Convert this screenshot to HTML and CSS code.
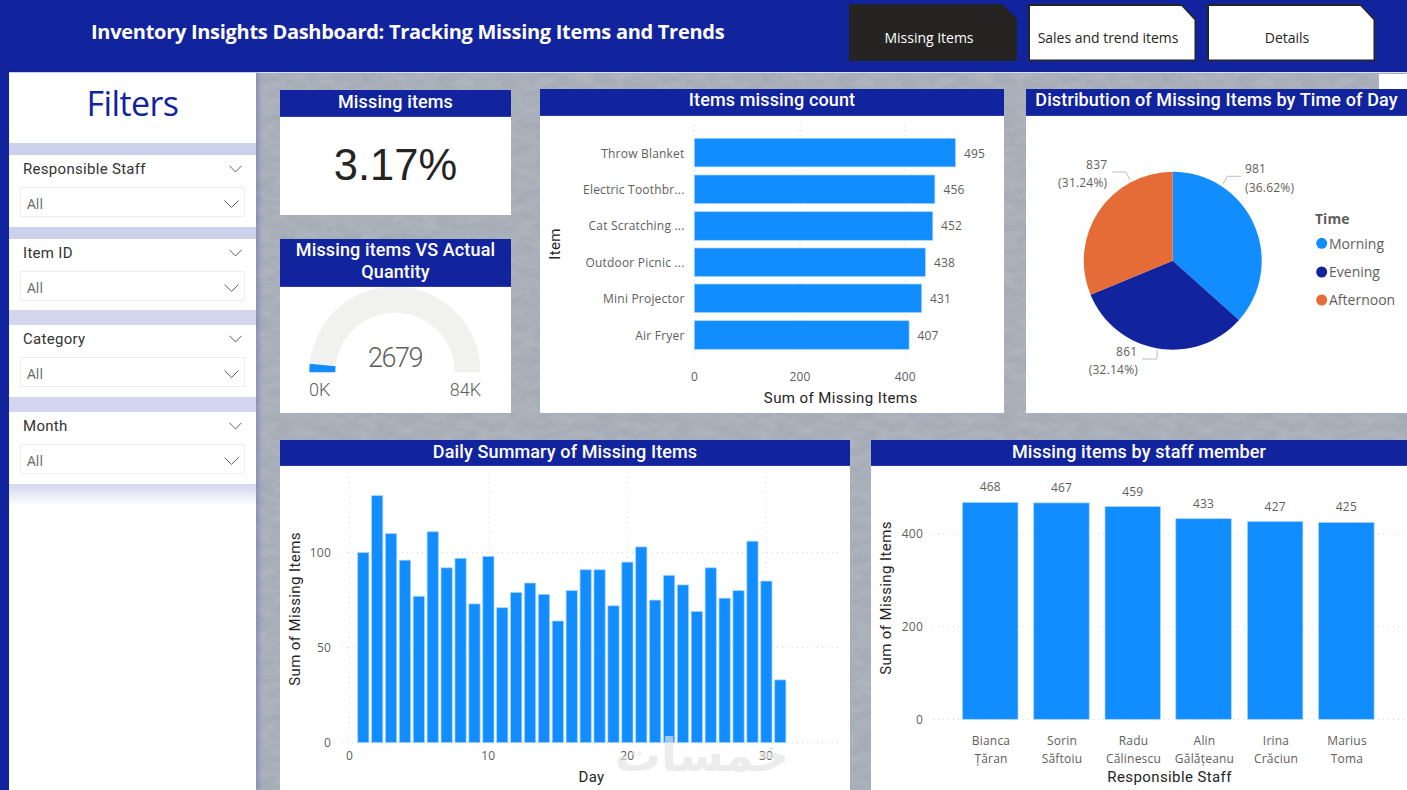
FILE: index.html
```html
<!DOCTYPE html>
<html lang="en">
<head>
<meta charset="utf-8">
<title>Inventory Insights Dashboard</title>
<link rel="stylesheet" href="styles.css">
</head>
<body>
<div class="page">
  <header class="topbar">
    <h1 class="page-title">Inventory Insights Dashboard: Tracking Missing Items and Trends</h1>
    <nav class="tabs">
      <a class="tab tab-active"><span>Missing Items</span></a>
      <a class="tab"><span>Sales and trend items</span></a>
      <a class="tab"><span>Details</span></a>
    </nav>
  </header>
  <div class="workspace">
    <aside class="sidebar">
      <h2 class="filters-title">Filters</h2>
      <div class="band"></div>
      <section class="slicer">
        <div class="slicer-head"><span>Responsible Staff</span><svg class="chev-s" viewBox="0 0 13 8"><path d="M.5.8 6.5 7l6-6.200"/></svg></div>
        <div class="dropdown"><span>All</span><svg class="chev-l" viewBox="0 0 15 8"><path d="M.5.6 7.500 7.400 14.500.6"/></svg></div>
      </section>
      <div class="band"></div>
      <section class="slicer slicer-short">
        <div class="slicer-head"><span>Item ID</span><svg class="chev-s" viewBox="0 0 13 8"><path d="M.5.8 6.5 7l6-6.200"/></svg></div>
        <div class="dropdown"><span>All</span><svg class="chev-l" viewBox="0 0 15 8"><path d="M.5.6 7.500 7.400 14.500.6"/></svg></div>
      </section>
      <div class="band band-tall"></div>
      <section class="slicer">
        <div class="slicer-head"><span>Category</span><svg class="chev-s" viewBox="0 0 13 8"><path d="M.5.8 6.5 7l6-6.200"/></svg></div>
        <div class="dropdown"><span>All</span><svg class="chev-l" viewBox="0 0 15 8"><path d="M.5.6 7.500 7.400 14.500.6"/></svg></div>
      </section>
      <div class="band band-tall"></div>
      <section class="slicer">
        <div class="slicer-head"><span>Month</span><svg class="chev-s" viewBox="0 0 13 8"><path d="M.5.8 6.5 7l6-6.200"/></svg></div>
        <div class="dropdown"><span>All</span><svg class="chev-l" viewBox="0 0 15 8"><path d="M.5.6 7.500 7.400 14.500.6"/></svg></div>
      </section>
      <div class="band-fade"></div>
    </aside>

    <main class="canvas">
      <div class="corner-patch"></div>
      <div class="row row-top">
        <div class="col-kpi">
          <section class="card card-kpi">
            <h3 class="card-title">Missing items</h3>
            <div class="kpi-value">3.17%</div>
          </section>
          <section class="card card-gauge">
            <h3 class="card-title card-title-double">Missing items VS Actual Quantity</h3>
            <svg class="chart" width="231" height="126" viewBox="0 0 231 126">
              <path class="gauge-track" d="M29.300 85.300A85.700 85.700 0 0 1 200.700 85.300H174.700A59.700 59.700 0 0 0 55.300 85.300Z"/>
              <path class="gauge-value" d="M29.300 85.300A85.700 85.700 0 0 1 29.730 76.730L55.600 79.330A59.700 59.700 0 0 0 55.300 85.300Z"/>
              <text class="gauge-num" x="115" y="79.500" text-anchor="middle">2679</text>
              <text class="gauge-end" x="29" y="108.500">0K</text>
              <text class="gauge-end" x="201" y="108.500" text-anchor="end">84K</text>
            </svg>
          </section>
        </div>

        <section class="card card-items">
          <h3 class="card-title">Items missing count</h3>
          <svg class="chart" width="464" height="297" viewBox="0 0 464 297">
            <g class="grid">
              <path d="M154.300 9V244M260 9V244M365.300 9V244"/>
            </g>
            <g class="bar">
              <rect x="154.300" y="22.300" width="261.200" height="28.600"/>
              <rect x="154.300" y="59" width="240.600" height="28.600"/>
              <rect x="154.300" y="95.700" width="238.500" height="28.600"/>
              <rect x="154.300" y="132" width="231.100" height="28.600"/>
              <rect x="154.300" y="168" width="227.400" height="28.600"/>
              <rect x="154.300" y="204.700" width="214.800" height="28.600"/>
            </g>
            <g class="tick end">
              <text x="144.500" y="42.300">Throw Blanket</text>
              <text x="144.500" y="78.300">Electric Toothbr...</text>
              <text x="144.500" y="114.300">Cat Scratching ...</text>
              <text x="144.500" y="151.300">Outdoor Picnic ...</text>
              <text x="144.500" y="187.300">Mini Projector</text>
              <text x="144.500" y="224.300">Air Fryer</text>
            </g>
            <g class="tick">
              <text x="424" y="42.300">495</text>
              <text x="403.500" y="78.300">456</text>
              <text x="401" y="114.300">452</text>
              <text x="394" y="151.300">438</text>
              <text x="390" y="187.300">431</text>
              <text x="377.500" y="224.300">407</text>
            </g>
            <g class="tick mid">
              <text x="154.500" y="265">0</text>
              <text x="260" y="265">200</text>
              <text x="365.300" y="265">400</text>
            </g>
            <text class="axis-title mid-anchor" x="300.700" y="287">Sum of Missing Items</text>
            <text class="axis-title mid-anchor" transform="translate(20 128) rotate(-90)">Item</text>
          </svg>
        </section>

        <section class="card card-pie">
          <h3 class="card-title">Distribution of Missing Items by Time of Day</h3>
          <svg class="chart" width="381" height="297" viewBox="0 0 381 297">
            <path class="s-morning" d="M146.700 144.700V55.700A89 89 0 0 1 213 204.100Z"/>
            <path class="s-evening" d="M146.700 144.700L213 204.100A89 89 0 0 1 64.500 178.700Z"/>
            <path class="s-afternoon" d="M146.700 144.700L64.500 178.700A89 89 0 0 1 146.700 55.700Z"/>
            <path class="leader" d="M196.700 68.300 201.300 60.300H214.700M104 64 100 56H86M131.300 234 131 243H116"/>
            <g class="tick">
              <text x="219" y="56.600">981</text>
              <text x="219" y="75.500">(36.62%)</text>
            </g>
            <g class="tick end">
              <text x="81.300" y="53">837</text>
              <text x="81.300" y="71">(31.24%)</text>
              <text x="111.300" y="240">861</text>
              <text x="112" y="258">(32.14%)</text>
            </g>
            <text class="legend-title" x="289" y="108">Time</text>
            <circle class="s-morning" cx="295.700" cy="127.300" r="5.500"/>
            <circle class="s-evening" cx="295.700" cy="156" r="5.500"/>
            <circle class="s-afternoon" cx="295.700" cy="184" r="5.500"/>
            <text class="legend-item" x="303" y="132.500">Morning</text>
            <text class="legend-item" x="303" y="161">Evening</text>
            <text class="legend-item" x="303" y="189">Afternoon</text>
          </svg>
        </section>
      </div>

      <div class="row row-bottom">
        <section class="card card-daily">
          <h3 class="card-title">Daily Summary of Missing Items</h3>
          <svg class="chart" width="570" height="324" viewBox="0 0 570 324">
            <g class="grid">
              <path d="M69.300 10.700V277M208.300 10.700V277M347.300 10.700V277M486 10.700V277M62 276.600H560.700M62 181.700H560.700M62 86.700H560.700"/>
            </g>
            <g class="bar bar-thin" transform="translate(69.300 276.600) scale(13.9 -1.9)">
              <rect x=".6" width=".81" height="100"/><rect x="1.600" width=".81" height="130"/><rect x="2.600" width=".81" height="110"/><rect x="3.600" width=".81" height="96"/><rect x="4.600" width=".81" height="77"/><rect x="5.600" width=".81" height="111"/><rect x="6.600" width=".81" height="92"/><rect x="7.600" width=".81" height="97"/><rect x="8.600" width=".81" height="73"/><rect x="9.600" width=".81" height="98"/><rect x="10.600" width=".81" height="71"/><rect x="11.600" width=".81" height="79"/><rect x="12.600" width=".81" height="84"/><rect x="13.600" width=".81" height="78"/><rect x="14.600" width=".81" height="64"/><rect x="15.600" width=".81" height="80"/><rect x="16.600" width=".81" height="91"/><rect x="17.600" width=".81" height="91"/><rect x="18.600" width=".81" height="72"/><rect x="19.600" width=".81" height="95"/><rect x="20.600" width=".81" height="103"/><rect x="21.600" width=".81" height="75"/><rect x="22.600" width=".81" height="88"/><rect x="23.600" width=".81" height="83"/><rect x="24.600" width=".81" height="69"/><rect x="25.600" width=".81" height="92"/><rect x="26.600" width=".81" height="76"/><rect x="27.600" width=".81" height="80"/><rect x="28.600" width=".81" height="106"/><rect x="29.600" width=".81" height="85"/><rect x="30.600" width=".81" height="33"/>
            </g>
            <g class="tick end">
              <text x="51" y="281">0</text>
              <text x="51" y="186">50</text>
              <text x="51" y="91">100</text>
            </g>
            <g class="tick mid">
              <text x="69.500" y="293.500">0</text>
              <text x="208.300" y="293.500">10</text>
              <text x="347.300" y="293.500">20</text>
              <text x="486" y="293.500">30</text>
            </g>
            <text class="axis-title mid-anchor" x="311.500" y="316">Day</text>
            <text class="axis-title mid-anchor" transform="translate(20 143) rotate(-90)">Sum of Missing Items</text>
          </svg>
          <div class="watermark" dir="rtl" lang="ar">خمسات</div>
        </section>

        <section class="card card-staff">
          <h3 class="card-title">Missing items by staff member</h3>
          <svg class="chart" width="536" height="324" viewBox="0 0 536 324">
            <g class="grid">
              <path d="M62 253.300H536M62 160.700H536M62 68H536"/>
            </g>
            <g class="bar">
              <rect x="91.500" y="36.500" width="55.500" height="216.800"/>
              <rect x="162.700" y="36.900" width="55.500" height="216.400"/>
              <rect x="234" y="40.600" width="55.500" height="212.700"/>
              <rect x="304.800" y="52.700" width="55.500" height="200.600"/>
              <rect x="376.400" y="55.500" width="55.500" height="197.800"/>
              <rect x="447.600" y="56.400" width="55.500" height="196.900"/>
            </g>
            <g class="tick mid">
              <text x="119.300" y="25">468</text>
              <text x="190.500" y="26">467</text>
              <text x="261.800" y="30">459</text>
              <text x="332.600" y="42">433</text>
              <text x="404.200" y="45">427</text>
              <text x="475.400" y="45">425</text>
              <text x="120" y="279">Bianca</text><text x="120" y="297">Țăran</text>
              <text x="191" y="279">Sorin</text><text x="191" y="297">Săftoiu</text>
              <text x="262.500" y="279">Radu</text><text x="262.500" y="297">Călinescu</text>
              <text x="333.500" y="279">Alin</text><text x="333.500" y="297">Gălățeanu</text>
              <text x="405" y="279">Irina</text><text x="405" y="297">Crăciun</text>
              <text x="476" y="279">Marius</text><text x="476" y="297">Toma</text>
            </g>
            <g class="tick end">
              <text x="52" y="257.600">0</text>
              <text x="52" y="165">200</text>
              <text x="52" y="72.300">400</text>
            </g>
            <text class="axis-title mid-anchor" x="298.600" y="316">Responsible Staff</text>
            <text class="axis-title mid-anchor" transform="translate(20 132) rotate(-90)">Sum of Missing Items</text>
          </svg>
        </section>
      </div>
    </main>
  </div>
</div>
</body>
</html>
```

FILE: styles.css
```css
* { box-sizing: border-box; }
html, body { margin: 0; padding: 0; }
body { background: #12239e; font-family: "Open Sans", "Noto Sans", sans-serif; }

.page { width: 1407px; height: 790px; overflow: hidden; display: flex; flex-direction: column; background: #12239e; }

/* header */
.topbar { height: 72px; flex: none; display: flex; align-items: flex-start; }
.page-title { margin: 18px 0 0 91px; width: 758px; font: 700 20px/28px "Open Sans", sans-serif; letter-spacing: -.29px; color: #fff; white-space: nowrap; }
.tabs { display: flex; gap: 11px; padding-top: 4px; }
.tab { width: 168px; height: 57px; display: flex; align-items: center; justify-content: center; padding: 11px 8px 0 0; font: 400 14px/20px "Open Sans", sans-serif; letter-spacing: -.02px; color: #252423; background: #252423; clip-path: polygon(0 0, 153px 0, 100% 15px, 100% 100%, 0 100%); position: relative; }
.tab::before { content: ""; position: absolute; inset: 1.5px; background: #fff; clip-path: polygon(0 0, 151.500px 0, 100% 14.500px, 100% 100%, 0 100%); }
.tab span { position: relative; }
.tab-active { color: #fff; }
.tab-active::before { display: none; }

/* body */
.workspace { flex: 1; display: flex; min-height: 0; padding-left: 9px; }
.sidebar { width: 247px; flex: none; background: #fff; box-shadow: 3px 0 4px rgba(18, 35, 158, .22); position: relative; z-index: 1; border-top: 1px solid #c9cdeb; }
.filters-title { margin: 0; height: 70px; padding-top: 7px; text-align: center; font: 400 34px/46px "Open Sans", sans-serif; letter-spacing: -.6px; color: #12239e; }

.band { height: 12px; background: #cdd1ec; }
.band-tall { height: 15px; background: #d3d6ee; }
.band-fade { height: 22px; background: linear-gradient(#d3d6ee, #fff); }

.slicer { height: 72px; padding: 0 11px; }
.slicer-short { height: 71px; }
.slicer-head { height: 32px; display: flex; align-items: center; justify-content: space-between; padding: 0 3px 4px 3px; font: 400 15px/18px Roboto, sans-serif; letter-spacing: .3px; color: #333; }
.chev-s { width: 13px; height: 8px; margin-top: -1px; }
.chev-s path, .chev-l path { fill: none; stroke: #605e5c; stroke-width: 1; }
.dropdown { height: 30px; display: flex; align-items: center; justify-content: space-between; padding: 3px 5px 0 6px; border: 1px solid #eeeeee; font: 400 14px/18px "Open Sans", sans-serif; color: #666; }
.chev-l { width: 15px; height: 8px; }

.canvas { flex: 1; min-width: 0; position: relative; padding: 16px 0 0 24px; border-top: 1px solid #dcdee6; background-color: #a6acb6; background-image: url("data:image/svg+xml,%3Csvg xmlns='http://www.w3.org/2000/svg' width='400' height='300'%3E%3Cfilter id='n'%3E%3CfeTurbulence type='fractalNoise' baseFrequency='.05 .12' numOctaves='4' seed='7'/%3E%3CfeColorMatrix values='0 0 0 0 1 0 0 0 0 1 0 0 0 0 1 .22 0 0 0 -.07'/%3E%3C/filter%3E%3Crect width='400' height='300' filter='url(%23n)'/%3E%3C/svg%3E"); }
.corner-patch { position: absolute; top: 1px; right: 0; width: 28px; height: 15px; background: #fff; }

.row { display: flex; align-items: flex-start; }
.row-top { gap: 22px; }
.row-bottom { gap: 21px; margin-top: 27px; }

.card { background: #fff; position: relative; flex: none; }
.card-title { margin: 0; height: 27px; padding-bottom: 2px; display: flex; align-items: center; justify-content: center; background: #12239e; border-bottom: 1px solid #2d3cab; font: 500 18px/24px Roboto, sans-serif; letter-spacing: .13px; color: #fff; text-align: center; white-space: nowrap; }
.card-title-double { height: 48px; white-space: normal; font-size: 18px; line-height: 22px; padding: 0 10px 3px; }
.card-items .card-title, .card-pie .card-title { padding-bottom: 4px; }
.row-bottom .card-title { height: 26px; padding-bottom: 1px; }

.col-kpi { width: 231px; flex: none; display: flex; flex-direction: column; gap: 24px; margin: 1px 7px 0 0; }
.card-kpi { height: 125px; }
.kpi-value { height: 98px; padding-bottom: 2px; display: flex; align-items: center; justify-content: center; font: 400 43.500px/50px "Liberation Sans", sans-serif; color: #252423; }
.card-gauge { height: 174px; }
.card-items { width: 464px; height: 324px; }
.card-pie { width: 381px; height: 324px; }
.card-daily { width: 570px; height: 350px; }
.card-staff { width: 536px; height: 350px; }

.chart { display: block; }

.grid path { fill: none; stroke: #d4d4d4; stroke-width: 1; stroke-dasharray: 1 4; }
.bar rect { fill: #118dff; stroke: #a8d4ff; stroke-width: .7; }
.bar-thin rect { vector-effect: non-scaling-stroke; }

.tick text { font: 400 12px "Open Sans", sans-serif; letter-spacing: .2px; fill: #605e5c; }
.tick.end text { text-anchor: end; }
.tick.mid text { text-anchor: middle; }
.axis-title { font: 400 15px Roboto, sans-serif; letter-spacing: .4px; fill: #252423; }
.mid-anchor { text-anchor: middle; }

.gauge-track { fill: #f1f1f0; }
.gauge-value { fill: #118dff; }
.gauge-num { font: 300 27px Roboto, sans-serif; letter-spacing: -1.5px; fill: #605e5c; }
.gauge-end { font: 300 18px Roboto, sans-serif; fill: #605e5c; }

.s-morning { fill: #118dff; }
.s-evening { fill: #12239e; }
.s-afternoon { fill: #e66c37; }
.leader { fill: none; stroke: #bdbdbd; stroke-width: 1; }
.legend-title { font: 700 14px "Open Sans", sans-serif; fill: #605e5c; }
.legend-item { font: 400 14px "Open Sans", sans-serif; fill: #605e5c; }

.watermark { position: absolute; left: 339px; top: 290px; width: 170px; text-align: center; font: 700 46px/50px "DejaVu Sans", sans-serif; color: rgba(228, 228, 228, .7); pointer-events: none; white-space: nowrap; }
```
